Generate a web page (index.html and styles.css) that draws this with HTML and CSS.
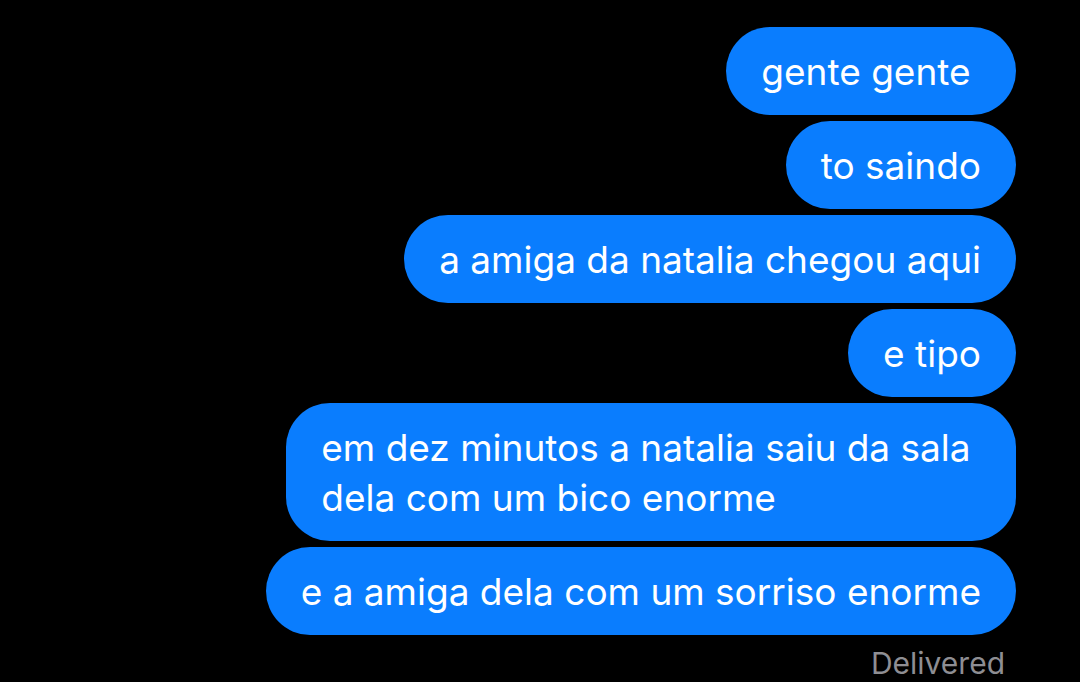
FILE: index.html
```html
<!DOCTYPE html>
<html>
<head>
    <title>Messages</title>
    <link rel="stylesheet" href="styles.css">
</head>
<body>
    <div class="thread">
        <div class="bubble">gente gente&nbsp;</div>
        <div class="bubble">to saindo</div>
        <div class="bubble">a amiga da natalia chegou aqui</div>
        <div class="bubble">e tipo</div>
        <div class="bubble">em dez minutos a natalia saiu da sala&nbsp;<br>dela com um bico enorme</div>
        <div class="bubble">e a amiga dela com um sorriso enorme</div>
        <div class="status">Delivered</div>
    </div>
</body>
</html>
```

FILE: styles.css
```css
body {
    margin: 0;
    background-color: #000;
    font-family: Inter, "Noto Sans", sans-serif;
}

.thread {
    display: flex;
    flex-direction: column;
    align-items: flex-end;
    gap: 6px;
    padding: 27px 64px 0 0;
}

.bubble {
    background-color: #0a7dfe;
    color: #fff;
    font-size: 37px;
    line-height: 50px;
    padding: 20px 35px 18px;
    border-radius: 44px;
}

.status {
    color: #8e8e93;
    font-size: 30px;
    line-height: 36px;
    margin: 4px 11px 0 0;
}
```
